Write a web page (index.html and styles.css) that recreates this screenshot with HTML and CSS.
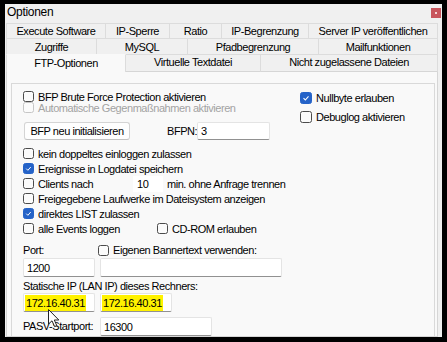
FILE: index.html
```html
<!DOCTYPE html>
<html>
<head>
	<meta charset="utf-8" />
	<title>Optionen</title>
	<link rel="stylesheet" href="styles.css">
</head>
<body>
	<div class="window">
		<div class="titlebar">
			<span class="title">Optionen</span>
			<span class="close"><span class="close-dot"></span></span>
		</div>

		<div class="tabs">
			<div class="tab-row row1">
				<div class="tab">Execute Software</div>
				<div class="tab">IP-Sperre</div>
				<div class="tab">Ratio</div>
				<div class="tab">IP-Begrenzung</div>
				<div class="tab">Server IP veröffentlichen</div>
			</div>
			<div class="tab-row row2">
				<div class="tab">Zugriffe</div>
				<div class="tab">MySQL</div>
				<div class="tab">Pfadbegrenzung</div>
				<div class="tab">Mailfunktionen</div>
			</div>
			<div class="tab-row row3">
				<div class="tab selected">FTP-Optionen</div>
				<div class="tab">Virtuelle Textdatei</div>
				<div class="tab">Nicht zugelassene Dateien</div>
			</div>
		</div>

		<div class="pane">
			<div class="group">
				<div class="top">
					<div class="top-left">
						<div class="chk"><span class="box"></span>BFP Brute Force Protection aktivieren</div>
						<div class="chk disabled"><span class="box"></span>Automatische Gegenmaßnahmen aktivieren</div>
						<div class="bfp-row">
							<div class="button">BFP neu initialisieren</div>
							<span class="bfpn-label">BFPN:</span>
							<div class="field bfpn">3</div>
						</div>
					</div>
					<div class="top-right">
						<div class="chk big checked"><span class="box"><svg viewBox="0 0 12 12"><polyline points="3,6.2 5.2,8.4 9,4" /></svg></span>Nullbyte erlauben</div>
						<div class="chk big"><span class="box"></span>Debuglog aktivieren</div>
					</div>
				</div>

				<div class="rows">
					<div class="chk row"><span class="box"></span>kein doppeltes einloggen zulassen</div>
					<div class="chk row checked"><span class="box"><svg viewBox="0 0 12 12"><polyline points="3,6.2 5.2,8.4 9,4" /></svg></span>Ereignisse in Logdatei speichern</div>
					<div class="chk row">
						<span class="box"></span><span class="clients-label">Clients nach</span>
						<span class="small-field">10</span>
						<span class="after-field">min. ohne Anfrage trennen</span>
					</div>
					<div class="chk row"><span class="box"></span>Freigegebene Laufwerke im Dateisystem anzeigen</div>
					<div class="chk row checked"><span class="box"><svg viewBox="0 0 12 12"><polyline points="3,6.2 5.2,8.4 9,4" /></svg></span>direktes LIST zulassen</div>
					<div class="chk row">
						<span class="box"></span><span class="events-label">alle Events loggen</span>
						<span class="box"></span>CD-ROM erlauben
					</div>
				</div>

				<div class="fields">
					<span class="label">Port:</span>
					<div class="chk banner"><span class="box"></span>Eigenen Bannertext verwenden:</div>

					<div class="field port">1200</div>
					<div class="field banner-field"></div>

					<span class="label wide">Statische IP (LAN IP) dieses Rechners:</span>

					<div class="field ip"><span class="mark">172.16.40.31</span></div>
					<div class="field ip"><span class="mark">172.16.40.31</span></div>

					<span class="label pasv">PASV-Startport:</span>
					<div class="field pasv-field">16300</div>
				</div>
			</div>
		</div>

		<svg class="cursor" viewBox="0 0 12 19" width="12" height="19">
			<path d="M0.5 0.5 L0.5 15 L4 11.8 L6.6 17.6 L8.8 16.6 L6.3 11 L10.8 11 Z" />
		</svg>
	</div>
</body>
</html>
```

FILE: styles.css
```css
*{
  box-sizing: border-box;
}

body{
  margin: 0;
  background: #000;
  font-family: "Liberation Sans", Arial, sans-serif;
  font-size: 11px;
  letter-spacing: -0.45px;
  color: #000;
}

.window{
  position: relative;
  margin: 4px 5px 0 5px;
  width: 437px;
  height: 333px;
  background: #f0f0f0;
  overflow: hidden;
}

/*    TITLE    */
.titlebar{
  height: 19px;
  display: flex;
  justify-content: space-between;
  align-items: flex-start;
  padding: 1px 1px 0 2px;
}
.title{
  font-size: 12px;
  letter-spacing: -0.3px;
  line-height: 14px;
}
.close{
  margin-top: 3px;
  width: 10px;
  height: 10px;
  background: #c8555c;
  display: flex;
  align-items: center;
  justify-content: center;
}
.close-dot{
  width: 2px;
  height: 2px;
  background: #f4d6d8;
}

/*    TABS    */
.tabs{
  margin-left: 1px;
  width: 432px;
}
.tab-row{
  display: grid;
}
.row1{
  grid-template-columns: 100px 64px 52px 87px 129px;
  height: 15px;
}
.row2{
  grid-template-columns: 91px 91px 131px 119px;
  height: 16px;
}
.row3{
  grid-template-columns: 120px 135px 177px;
  height: 18px;
}
.tab{
  background: #f0f0f0;
  border-top: 1px solid #dcdcdc;
  border-right: 1px solid #dcdcdc;
  display: flex;
  align-items: center;
  justify-content: center;
  white-space: nowrap;
}
.tab:first-child{
  border-left: 1px solid #dcdcdc;
}
.row3 .tab{
  border-bottom: 1px solid #d6d6d6;
  padding-bottom: 2px;
}
.row3 .tab.selected{
  background: #f9f9f9;
  border-top-color: #f9f9f9;
  border-bottom: none;
  padding-bottom: 1px;
}

/*    PANE    */
.pane{
  margin-left: 1px;
  width: 432px;
  height: 265px;
  background: #f9f9f9;
  border: 1px solid #d6d6d6;
  border-top: none;
  padding: 11px 2px 0 4px;
}
.group{
  height: 100%;
  border: 1px solid #d9d9d9;
  border-bottom: none;
  padding: 7px 0 0 11px;
}

.top{
  display: flex;
}
.top-left{
  width: 277px;
}
.top-right{
  padding-top: 1px;
  display: flex;
  flex-direction: column;
  gap: 7px;
}

/*    CHECKBOXES    */
.chk{
  display: flex;
  align-items: center;
  height: 11px;
  white-space: nowrap;
}
.box{
  flex: none;
  width: 11px;
  height: 11px;
  margin-right: 4px;
  border: 1px solid #4b4b4b;
  border-radius: 2.5px;
  background: #fbfbfb;
  display: flex;
}
.chk.big{
  height: 12px;
}
.chk.big .box{
  width: 12px;
  height: 12px;
}
.chk.checked .box{
  background: #2563c8;
  border-color: #2563c8;
}
.box svg{
  width: 100%;
  height: 100%;
}
.box polyline{
  fill: none;
  stroke: #fff;
  stroke-width: 1.3;
}
.chk.disabled{
  color: #a3a3a3;
}
.chk.disabled .box{
  border-color: #c6c6c6;
}

.bfp-row{
  margin-top: 9px;
  display: flex;
  align-items: center;
  height: 18px;
}
.button{
  margin-left: 1px;
  width: 106px;
  height: 18px;
  background: #fefefe;
  border: 1px solid #d4d4d4;
  border-bottom-color: #c2c2c2;
  border-radius: 3px;
  display: flex;
  align-items: center;
  justify-content: center;
}
.bfpn-label{
  flex: none;
  margin-left: 37px;
  width: 30px;
  white-space: nowrap;
}

/*    ROWS    */
.rows{
  margin-top: 6px;
}
.chk.row{
  height: 15px;
}
.clients-label{
  width: 95px;
}
.small-field{
  width: 30px;
  height: 16px;
  background: #fff;
  padding-left: 4px;
  display: flex;
  align-items: center;
}
.after-field{
  margin-left: 4px;
}
.events-label{
  width: 119px;
}

/*    FIELDS    */
.field{
  height: 19px;
  background: #fff;
  border: 1px solid #e4e4e4;
  border-bottom-color: #919191;
  border-radius: 2px;
  padding-left: 3px;
  display: flex;
  align-items: center;
  white-space: nowrap;
}
.bfpn{
  flex: none;
  width: 73px;
  height: 18px;
}

.fields{
  margin-top: 6px;
  display: grid;
  grid-template-columns: 72px 182px;
  grid-template-rows: 16px 19px 16px 19px 24px;
  column-gap: 5px;
}
.label{
  align-self: center;
  white-space: nowrap;
}
.label.wide{
  grid-column: 1 / 3;
  align-self: end;
  line-height: 13px;
}
.label.pasv{
  align-self: end;
  line-height: 19px;
}
.chk.banner{
  margin-left: -2px;
  align-self: center;
}
.port, .ip{
  width: 72px;
}
.banner-field{
  width: 182px;
}
.pasv-field{
  width: 112px;
  align-self: end;
}
.mark{
  margin-left: -2px;
  padding: 2px 1px;
  background: #fff200;
}

/*    CURSOR    */
.cursor{
  position: absolute;
  left: 43px;
  top: 305px;
}
.cursor path{
  fill: #fff;
  stroke: #222;
  stroke-width: 1;
}
```
